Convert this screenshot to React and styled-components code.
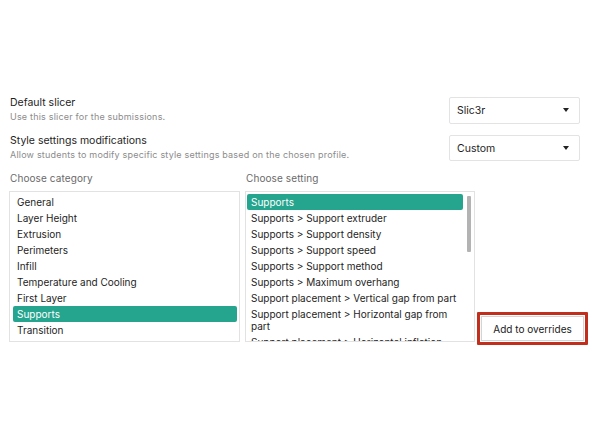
import React from "react";
import styled, { createGlobalStyle } from "styled-components";

const Global = createGlobalStyle`
  html, body { margin: 0; padding: 0; background: #ffffff; }
  body { font-family: Inter, "Noto Sans", sans-serif; color: #1f1f1f; }
  * { box-sizing: border-box; }
`;

const Page = styled.div`
  width: 592px;
  height: 444px;
  padding: 96px 0 0 9px;
  display: flex;
  flex-direction: column;
`;

const SettingRow = styled.div`
  display: flex;
  align-items: center;
  justify-content: space-between;
  height: 28px;
  padding-right: 12px;
  margin-bottom: ${(p) => p.$gap || 0}px;
`;

const TextBlock = styled.div`
  display: flex;
  flex-direction: column;
  padding-left: 1px;
`;

const Title = styled.div`
  font-size: 10.5px;
  line-height: 14px;
  color: #1e1e1e;
`;

const Desc = styled.div`
  font-size: 9px;
  line-height: 14px;
  color: #8c8c8c;
  letter-spacing: 0.2px;
`;

const Select = styled.div`
  width: 131px;
  height: ${(p) => p.$h}px;
  border: 1px solid #e3e3e3;
  border-radius: 2px;
  background: #fff;
  display: flex;
  align-items: center;
  justify-content: space-between;
  padding: 0 10px 0 7px;
  font-size: 10.5px;
  color: #1e1e1e;
`;

const Caret = styled.span`
  width: 0;
  height: 0;
  border-left: 3.5px solid transparent;
  border-right: 3.5px solid transparent;
  border-top: 4px solid #222;
`;

const Lists = styled.div`
  display: flex;
  margin-top: 9px;
`;

const Column = styled.div`
  display: flex;
  flex-direction: column;
  flex: none;
  width: ${(p) => p.$w}px;
  margin-right: ${(p) => p.$mr || 0}px;
`;

const ColLabel = styled.div`
  font-size: 10px;
  line-height: 14px;
  color: #6a6a6a;
  padding-left: 1px;
  margin-bottom: 6px;
  letter-spacing: 0.1px;
`;

const ListBox = styled.div`
  position: relative;
  height: 151px;
  border: 1px solid #e2e2e2;
  padding: ${(p) => p.$pad};
  overflow: hidden;
  background: #fff;
`;

const ScrollThumb = styled.div`
  position: absolute;
  top: 4px;
  right: 3px;
  width: 4px;
  height: 56px;
  background: #b3b3b3;
  border-radius: 1px;
`;

const Item = styled.div`
  font-size: 10px;
  line-height: 12px;
  padding: 2px ${(p) => p.$pl}px;
  border-radius: 2px;
  background: ${(p) => (p.$active ? "#25a58e" : "transparent")};
  color: ${(p) => (p.$active ? "#ffffff" : "#1e1e1e")};
`;

const ButtonWrap = styled.div`
  flex: none;
  align-self: flex-end;
  margin-bottom: -3px;
  margin-left: 2px;
  border: 3px solid #c22e1c;
  border-radius: 1px;
  padding: 1px;
  width: 111px;
  height: 33px;
  display: flex;
`;

const Button = styled.button`
  flex: 1;
  border: 1px solid #d4d4d4;
  background: #fff;
  font-family: Inter, "Noto Sans", sans-serif;
  font-size: 10px;
  color: #1a1a1a;
  padding: 0;
`;

const categories = [
  "General",
  "Layer Height",
  "Extrusion",
  "Perimeters",
  "Infill",
  "Temperature and Cooling",
  "First Layer",
  "Supports",
  "Transition",
];

const settings = [
  "Supports",
  "Supports > Support extruder",
  "Supports > Support density",
  "Supports > Support speed",
  "Supports > Support method",
  "Supports > Maximum overhang",
  "Support placement > Vertical gap from part",
  "Support placement > Horizontal gap from part",
  "Support placement > Horizontal inflation",
];

export default function App() {
  return (
    <>
      <Global />
      <Page>
        <SettingRow $gap={10}>
          <TextBlock>
            <Title>Default slicer</Title>
            <Desc>Use this slicer for the submissions.</Desc>
          </TextBlock>
          <Select $h={27}>
            <span>Slic3r</span>
            <Caret />
          </Select>
        </SettingRow>
        <SettingRow>
          <TextBlock>
            <Title>Style settings modifications</Title>
            <Desc>Allow students to modify specific style settings based on the chosen profile.</Desc>
          </TextBlock>
          <Select $h={26}>
            <span>Custom</span>
            <Caret />
          </Select>
        </SettingRow>
        <Lists>
          <Column $w={231} $mr={5}>
            <ColLabel>Choose category</ColLabel>
            <ListBox $pad="2px 2px 2px 3px">
              {categories.map((c) => (
                <Item key={c} $pl={4} $active={c === "Supports"}>
                  {c}
                </Item>
              ))}
            </ListBox>
          </Column>
          <Column $w={230}>
            <ColLabel>Choose setting</ColLabel>
            <ListBox $pad="2px 11px 2px 1px">
              {settings.map((s, i) => (
                <Item key={s} $pl={4} $active={i === 0}>
                  {s}
                </Item>
              ))}
              <ScrollThumb />
            </ListBox>
          </Column>
          <ButtonWrap>
            <Button>Add to overrides</Button>
          </ButtonWrap>
        </Lists>
      </Page>
    </>
  );
}
